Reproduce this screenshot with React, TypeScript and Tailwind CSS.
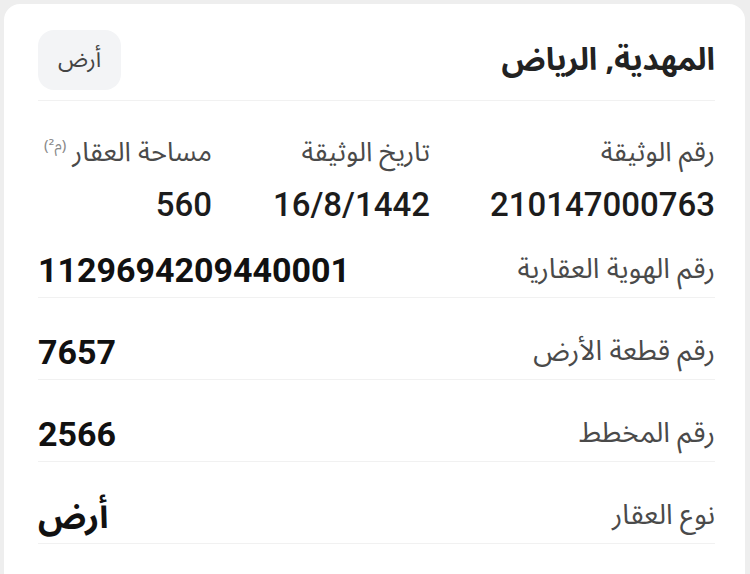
const arabic = 'font-["Noto_Sans_Arabic","Noto_Kufi_Arabic","DejaVu_Sans",sans-serif]';

interface Row {
  label: string;
  value: string;
}

const rows: Row[] = [
  { label: 'رقم الهوية العقارية', value: '1129694209440001' },
  { label: 'رقم قطعة الأرض', value: '7657' },
  { label: 'رقم المخطط', value: '2566' },
  { label: 'نوع العقار', value: 'أرض' },
];

export default function App() {
  return (
    <div className="min-h-screen bg-[#eeeeee] pt-1 pl-1 pr-[5px] overflow-hidden">
      <div dir="rtl" className={`bg-white rounded-t-2xl min-h-[570px] pr-[30px] pl-[34px] ${arabic}`}>
        {/* header */}
        <div className="flex items-center justify-between pt-[26px] pb-[10px] border-b border-[#f1f1f1]">
          <h1 className="text-[31px] font-bold text-[#222] leading-none">المهدية, الرياض</h1>
          <span className="h-[60px] w-[83px] rounded-2xl bg-[#f3f4f6] flex items-center justify-center text-[23px] text-[#444]">
            أرض
          </span>
        </div>

        {/* document info */}
        <div className="grid grid-cols-[285px_218px_1fr] pt-[36px]">
          <div className="text-[27px] leading-8 text-[#4a4a4a]">رقم الوثيقة</div>
          <div className="text-[27px] leading-8 text-[#4a4a4a]">تاريخ الوثيقة</div>
          <div className="text-[27px] leading-8 text-[#4a4a4a] flex items-start gap-1.5">
            مساحة العقار
            <span className="text-[15px] text-[#888] leading-5 -mt-0.5">(م²)</span>
          </div>
          <div dir="ltr" className="text-right mt-[16px] text-[33px] leading-10 font-medium text-[#1c1c1c] font-['Roboto',sans-serif]">210147000763</div>
          <div dir="ltr" className="text-right mt-[16px] text-[33px] leading-10 font-medium text-[#1c1c1c] font-['Roboto',sans-serif]">16/8/1442</div>
          <div dir="ltr" className="text-right mt-[16px] text-[33px] leading-10 font-medium text-[#1c1c1c] font-['Roboto',sans-serif]">560</div>
        </div>

        {/* rows */}
        {rows.map((r, i) => (
          <div
            key={r.label}
            className={`flex items-center justify-between border-b border-[#f1f1f1] pb-[7px] ${i === 0 ? 'pt-[25px]' : 'pt-[34px]'}`}
          >
            <span className="text-[28px] leading-10 text-[#4a4a4a]">{r.label}</span>
            <span className="text-[34px] leading-10 font-bold text-[#111] font-['Roboto','Noto_Sans_Arabic','DejaVu_Sans',sans-serif]">{r.value}</span>
          </div>
        ))}
      </div>
    </div>
  );
}
